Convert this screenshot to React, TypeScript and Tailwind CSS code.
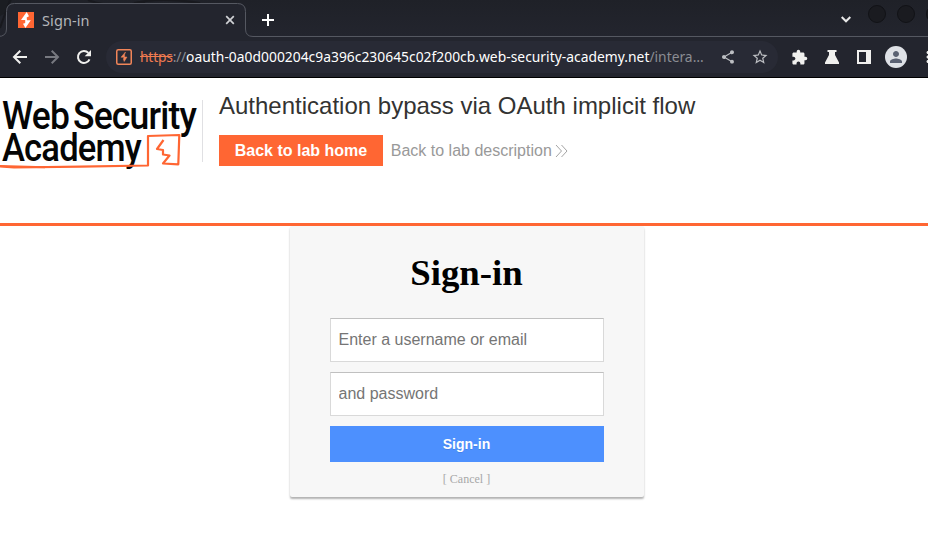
import React from "react";
import {
  MdShare,
  MdStarBorder,
  MdExtension,
  MdPerson,
  MdMoreVert,
} from "react-icons/md";

function TabStrip() {
  return (
    <div className="relative h-[37px] shrink-0 overflow-hidden bg-gradient-to-b from-[#1f2128] to-[#23252e]">
      <svg className="absolute left-0 top-0" width="928" height="37" viewBox="0 0 928 37" fill="none">
        <path d="M0 0H12L5 13L0 16Z" fill="#1b1d22" />
        <path d="M10 0L0 28M88 0Q110 9 145 2M134 3Q160 -3 200 3" stroke="#18191e" strokeWidth="2" />
        <path
          d="M-2 36.5Q6.5 36.5 6.5 29V11.500Q6.500 3.500 14.500 3.500H237.500Q245.500 3.500 245.500 11.500V29Q245.500 36.500 253 36.500H928V38H-2Z"
          fill="#23252e"
          stroke="#555861"
        />
      </svg>
      <div className="relative flex h-full items-start font-['Noto_Sans',sans-serif]">
        <div className="flex h-[33px] w-[246px] items-center pl-[18px] pr-[11px] pt-[7px]">
          <svg width="16" height="16" viewBox="0 0 16 16" className="shrink-0">
            <path d="M0 0H16V16H0Z" fill="#ff6633" />
            <path d="M8.700 0L3 8H7.200V11L5 11.800L7.400 16L12.800 8.300H9L8.700 5.500L11 4.300Z" fill="#fff" />
          </svg>
          <span className="ml-2 text-[14.500px] leading-5 tracking-[0.1px] text-[#b4b6ba]">Sign-in</span>
          <svg width="10" height="10" viewBox="0 0 10 10" className="ml-auto" fill="none" stroke="#d0d2d5" strokeWidth="1.700">
            <path d="M1.200 1.200L8.800 8.800M8.800 1.200L1.200 8.800" />
          </svg>
        </div>
        <svg width="12" height="12" viewBox="0 0 12 12" className="ml-4 mt-[14px]" fill="none" stroke="#fff" strokeWidth="2">
          <path d="M6 0V12M0 6H12" />
        </svg>
        <div className="ml-auto flex">
          <svg width="10" height="7" viewBox="0 0 10 7" className="mr-[4px] mt-[16px]" fill="none" stroke="#e8e8e8" strokeWidth="2">
            <path d="M.7 1L5 5.300L9.300 1" />
          </svg>
          <div className="ml-[13px] mt-[5px] size-[18px] rounded-full border border-[#111216] bg-[#1a1b20]" />
          <div className="ml-[11px] mt-[5px] size-[18px] rounded-full border border-[#111216] bg-[#1a1b20]" />
          <div className="ml-[11px] mt-[5px] h-[18px] w-[2px] shrink-0 overflow-hidden">
            <div className="size-[18px] rounded-full border border-[#111216] bg-[#1a1b20]" />
          </div>
        </div>
      </div>
    </div>
  );
}

function Toolbar() {
  return (
    <div className="flex h-[41px] shrink-0 items-center overflow-hidden border-b border-black bg-[#23252e] pl-3 font-['Noto_Sans',sans-serif] text-[#f0f0ee]">
      <svg width="16" height="16" viewBox="0 0 16 16" className="shrink-0" fill="none" stroke="#f0f0ee" strokeWidth="2">
        <path d="M15 8H2.500M8.300 1.700L2 8L8.300 14.300" />
      </svg>
      <svg width="16" height="16" viewBox="0 0 16 16" className="ml-4 shrink-0" fill="none" stroke="#777980" strokeWidth="2">
        <path d="M1 8H13.500M7.700 1.700L14 8L7.700 14.300" />
      </svg>
      <svg width="16" height="16" viewBox="0 0 16 16" className="ml-4 shrink-0">
        <path d="M13.500 10.300A6 6 0 1 1 12.400 3.900" fill="none" stroke="#f0f0ee" strokeWidth="2" />
        <path d="M15 1V7.300H8.700Z" fill="#f0f0ee" />
      </svg>
      <div className="ml-[14px] flex h-8 w-[672px] shrink-0 items-center rounded-full bg-[#282a35] pl-[10px] pr-[9px]">
        <svg width="16" height="16" viewBox="0 0 16 16" fill="none" className="shrink-0">
          <rect x=".75" y=".75" width="14.500" height="14.500" rx="1.500" stroke="#f28559" strokeWidth="1.500" />
          <path d="M9.500 3L5 8.200H8L7.400 10.200L8.200 12.500L11 8H8.600V5.500Z" fill="#f28559" stroke="#f28559" strokeWidth=".5" />
        </svg>
        <div className="ml-2 whitespace-nowrap text-[13.830px] leading-5 text-[#8b8d93]">
          <span className="tracking-[-0.200px] text-[#f07b50] line-through">https</span>
          <span className="tracking-[-0.200px]">://</span>
          <span className="tracking-[0.020px] text-white">oauth-0a0d000204c9a396c230645c02f200cb.web-security-academy.net</span>
          <span>/intera…</span>
        </div>
        <MdShare className="ml-auto size-4 shrink-0 text-[#bcbec2]" />
        <MdStarBorder className="ml-[15px] size-[18px] shrink-0 text-[#bcbec2]" />
      </div>
      <MdExtension className="ml-[13px] size-[17px] shrink-0" />
      <svg width="16" height="16" viewBox="0 0 16 16" className="ml-4 shrink-0">
        <path d="M3.500 1H12.500V3H11V6L15 13.500V15H1V13.500L5 6V3H3.500Z" fill="#f0f0ee" />
      </svg>
      <svg width="16" height="16" viewBox="0 0 16 16" className="ml-4 shrink-0">
        <path d="M1 1H15V15H1ZM3 3V13H10V3Z" fill="#f0f0ee" fillRule="evenodd" />
      </svg>
      <div className="ml-[13px] flex size-[22px] shrink-0 items-center justify-center rounded-full bg-[#dee1e6]">
        <MdPerson className="size-[18px] text-[#5a6172]" />
      </div>
      <MdMoreVert className="ml-[12px] size-[18px] shrink-0" />
    </div>
  );
}

function AcademyLogo() {
  return (
    <svg width="202" height="100" viewBox="0 0 202 100" className="shrink-0" fill="none">
      <g fill="#050505" fontFamily="Roboto, sans-serif" fontWeight="500" fontSize="38" letterSpacing="-0.9">
        <text x="2" y="51" textLength="67" lengthAdjust="spacingAndGlyphs">Web</text>
        <text x="73" y="51" textLength="123" lengthAdjust="spacingAndGlyphs">Security</text>
        <text x="2" y="83" textLength="139" lengthAdjust="spacingAndGlyphs">Academy</text>
      </g>
    </svg>
  );
}

function LogoMark() {
  return (
    <svg width="184" height="40" viewBox="0 0 184 40" className="absolute left-0 top-[53px]" fill="none" stroke="#ff6633">
      <path d="M0 35.300L14 36.500L80 35.700L148 34.500V5L179.300 4L178.300 33.300L163 32.500L169.500 24.500L163 23.500L163 19L157 18L163.500 9" strokeWidth="2.200" strokeLinejoin="round" />
      <path d="M0 35L45 36.300" strokeWidth="2" />
    </svg>
  );
}

function LabHeader() {
  return (
    <header className="flex h-[148px] shrink-0 border-b-[3px] border-[#ff6633] font-['Liberation_Sans',Arial,sans-serif]">
      <div className="relative w-[202px] shrink-0">
        <AcademyLogo />
        <LogoMark />
      </div>
      <div className="mt-[22px] h-[62px] w-px shrink-0 bg-[#e0e0e3]" />
      <div className="ml-4 pt-[14px]">
        <h2 className="text-2xl leading-7 text-[#333332]">Authentication bypass via OAuth implicit flow</h2>
        <div className="mt-[15px] flex h-[31px] items-center">
          <a className="flex h-[31px] w-[164px] items-center justify-center bg-[#ff6633] text-base font-bold text-white">
            Back to lab home
          </a>
          <a className="ml-[7.800px] flex items-center text-base text-[#999]">
            Back to lab description
            <svg width="14" height="14" viewBox="0 0 14 14" fill="none" stroke="#999" strokeWidth=".9" className="ml-[3px]">
              <path d="M1 1L6.500 7L1 13M6.500 1L12 7L6.500 13" />
            </svg>
          </a>
        </div>
      </div>
    </header>
  );
}

function LoginCard() {
  const field =
    "h-11 w-full border border-[#d9d9d9] border-t-[#c0c0c0] bg-white px-2 text-base text-black outline-none placeholder:text-[#757575]";
  return (
    <form className="ml-[289.500px] flex h-[271px] w-[354px] flex-col rounded-[2px] bg-[#f7f7f7] px-10 pt-[26px] font-['Liberation_Sans',Arial,sans-serif] shadow-[0px_2px_2px_rgba(0,0,0,0.3)]">
      <h1 className="text-center font-['Liberation_Serif','Times_New_Roman',serif] text-[36.800px] font-bold leading-[42px] text-black">
        Sign-in
      </h1>
      <div className="mt-[24px] flex flex-col gap-[10px]">
        <input className={field} placeholder="Enter a username or email" />
        <input className={field} type="password" placeholder="and password" />
        <button
          type="button"
          className="h-9 bg-[#4d90fe] text-sm font-bold text-white [text-shadow:0_1px_rgba(0,0,0,0.1)]"
        >
          Sign-in
        </button>
      </div>
      <a className="mt-[10px] text-center font-['Liberation_Serif','Times_New_Roman',serif] text-xs leading-[14px] text-[#a8a8a8]">
        [ Cancel ]
      </a>
    </form>
  );
}

export default function App() {
  return (
    <div className="flex h-[553px] w-[928px] flex-col overflow-hidden bg-white">
      <TabStrip />
      <Toolbar />
      <LabHeader />
      <LoginCard />
    </div>
  );
}
